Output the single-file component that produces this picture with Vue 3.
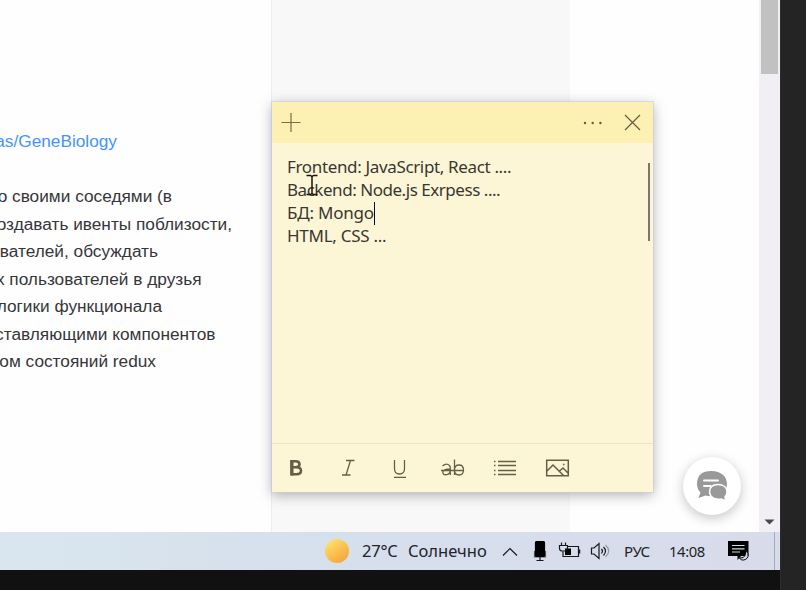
<script setup>
const lines = [
  { text: 'о своими соседями (в', end: 172 },
  { text: 'оздавать ивенты поблизости,', end: 232 },
  { text: 'вателей, обсуждать', end: 158 },
  { text: 'х пользователей в друзья', end: 201.5 },
  { text: 'логики функционала', end: 162 },
  { text: 'ставляющими компонентов', end: 215.5 },
  { text: 'ом состояний redux', end: 156 },
]
const note = [
  { text: 'Frontend: JavaScript, React ....', gap: -0.35 },
  { text: 'Backend: Node.js Exrpess ....', gap: -0.46 },
  { text: 'БД: Mongo', gap: -0.2, caret: true },
  { text: 'HTML, CSS ...', gap: -0.28 },
]
</script>

<template>
  <div class="desktop">
    <div class="screen">
      <main class="browser">
        <article class="article">
          <div class="link" :style="{ width: '117px' }"><span>as/GeneBiology</span></div>
          <div class="para">
            <div v-for="l in lines" :key="l.text" class="line" :style="{ width: l.end + 'px' }"><span>{{ l.text }}</span></div>
          </div>
        </article>
        <aside class="column"></aside>
        <div class="rest"></div>
        <div class="scroll">
          <div class="thumb"></div>
          <svg width="11" height="6" viewBox="0 0 11 6"><path d="M.5.5h10L5.500 5.500z" fill="#484848" /></svg>
        </div>
      </main>

      <footer class="taskbar">
        <div class="sun"></div>
        <span class="temp">27°C</span>
        <span class="weather">Солнечно</span>
        <svg class="tray" width="170" height="38" viewBox="0 0 170 38">
          <g fill="none" stroke="#16181d" stroke-width="1.200">
            <path d="M13 23.500l7-7 7 7" />
            <path d="M44.500 19v6h11v-6" fill="#777d88" stroke="#555b66" />
            <rect x="45.500" y="9.500" width="9" height="15" rx="1" fill="#000" stroke="#000" />
            <path d="M50 25v4M46.500 28.500h7" />
            <path d="M78 14.500h10.500v10H73v-5" />
            <path d="M89.500 17.500v4" stroke-width="1.500" />
            <rect x="75" y="16.500" width="6" height="6.500" fill="#000" stroke="none" />
            <path d="M71.500 10.500v3M75.500 10.500v3M69.500 13.500h8v3q0 2.500-3 2.500h-2q-3 0-3-2.500z" />
            <path d="M101.500 16v6h2.500l5 4.500v-15l-5 4.500z" />
            <path d="M111.500 17q2 2 0 4.500M113.500 15q4 4 0 8.500" />
            <path d="M115.500 13q6.500 6 0 12" stroke="#9299a8" />
          </g>
        </svg>
        <span class="lang">РУС</span>
        <span class="clock">14:08</span>
        <svg class="notify" width="24" height="24" viewBox="0 0 24 24">
          <path d="M1 2h20.500v15H14l-3.500 4V17H1z" fill="#000" />
          <path d="M5 6.500h12.500M5 9.800h12.500M5 13h8" stroke="#d3d8e5" stroke-width="1.200" />
          <path d="M18.500 11.500q3.500 2.500 2.500 6-1.500 4-6.500 3.500l-2-2q4.500.500 5.500-2.500.800-2.500.500-5z" fill="#d3d8e5" stroke="#000" />
        </svg>
        <i class="peek"></i>
      </footer>
    </div>

    <section class="note">
      <header class="head">
        <svg width="20" height="20" viewBox="0 0 20 20"><path d="M.5 9.500h19M10 0v19" stroke="#776d48" stroke-width="1.200" /></svg>
        <svg class="dots" width="20" height="4" viewBox="0 0 20 4"><g fill="#655d40"><circle cx="2" cy="2" r="1.200" /><circle cx="9.700" cy="2" r="1.200" /><circle cx="17.400" cy="2" r="1.200" /></g></svg>
        <svg width="17" height="17" viewBox="0 0 17 17"><path d="M1 1l15 15M16 1L1 16" stroke="#655d40" stroke-width="1.200" /></svg>
      </header>
      <div class="body">
        <div class="written">
          <div v-for="n in note" :key="n.text" class="row"><span :style="{ letterSpacing: n.gap + 'px' }">{{ n.text }}</span><i v-if="n.caret" class="caret"></i></div>
        </div>
        <div class="bar"></div>
      </div>
      <div class="tools">
        <svg width="381" height="49" viewBox="0 0 381 49">
          <g fill="none" stroke="#665f47" stroke-width="1.300">
            <path d="M19.800 17v15.500" stroke-width="3.400" />
            <path d="M19 18.300h4.500q4 0 4 3 0 3-4 3H20h4.500q4.500 0 4.500 3.400 0 3.500-4.500 3.500H19" stroke-width="2.600" />
            <path d="M74 17.500h8.500M70 32h8.500M78.500 17.500l-4.500 14.500" />
            <path d="M122.500 17v8.500q0 5.500 5 5.500t5-5.500V17M122 34.300h12" />
            <path d="M170.500 23q4-3.500 7-.500.8 1 .8 3v6.500M178.300 26q-7 0-7.500 3 0 3 3.500 2.700 3.500-.200 4-4M182.500 16.500V32M182.500 27q0-5 4.500-5t4.500 5-4.500 5-4.500-5M169 27.500h23" />
            <path d="M226 18.500H244M226 22.500H244M226 27.500H244M226 31.500H244" stroke-width="1.400" />
            <path d="M222 18.500h1.500M222 22.500h1.500M222 27.500h1.500M222 31.500h1.500" />
            <path d="M274.700 17.200h21.600v15.600h-21.600zM275 28l6-6 10.500 10.500M287 28.500l4-3.500 5 5" stroke-width="1.500" />
            <path d="M291 21.500h1.500" />
          </g>
        </svg>
      </div>
    </section>

    <button class="chat" aria-label="Чат">
      <svg width="32" height="32" viewBox="0 0 32 32">
        <path d="M15.500 1C25 1 31 6.500 31 14q0 7-7 10.500-8 3-14.500 1L2.500 28l2-5.500Q1 19 1 14 1 1 15.500 1z" fill="#999" />
        <path d="M8 10.500h14M8 16h6.500" stroke="#fff" stroke-width="2" stroke-linecap="round" />
        <path d="M22 14.500c5.500 0 9 3 9 7.500q0 3-2 5l1 4-4.500-2q-11 1.500-12-7 0-7.500 8.500-7.500z" fill="#999" stroke="#fff" stroke-width="1.500" />
      </svg>
    </button>

    <svg class="pointer" width="12" height="22" viewBox="0 0 12 22"><path d="M.5 1.500h4l1.500 1 1.500-1h4M6 2.500v17M.5 20.500h4l1.500-1 1.500 1h4" fill="none" stroke="#18150e" stroke-width="1.500" /></svg>
  </div>
</template>

<style>
body { margin: 0; background: #111; overflow: hidden; }
</style>

<style scoped>
.desktop { position: relative; box-sizing: border-box; width: 806px; height: 590px; overflow: hidden; background: #111; border-right: 25px solid #242424; }
.desktop::after { content: ''; position: absolute; right: 0; top: 0; width: 1px; height: 590px; background: #2d2d31; }
.screen { display: flex; flex-direction: column; width: 780px; height: 570px; }
.browser { display: flex; height: 532px; background: #fefefe; }
.article { width: 271px; overflow: hidden; font: 17.25px/27.45px "Liberation Sans", Arial, sans-serif; color: #36363a; padding-top: 128px; box-sizing: border-box; }
.link, .line { display: flex; justify-content: flex-end; white-space: nowrap; }
.link { color: #4694f4; }
.para { padding-top: 28px; }
.column { box-sizing: border-box; width: 299px; background: #f8f8f8; border-left: 1px solid #eee; }
.rest { flex: 1; }
.scroll { width: 21px; background: #f1eff3; display: flex; flex-direction: column; align-items: center; justify-content: space-between; padding-bottom: 7px; box-sizing: border-box; }
.thumb { width: 17px; height: 74px; background: #c1c1c1; }
.taskbar { display: flex; align-items: center; height: 38px; background: linear-gradient(90deg, #d9e6ef, #d6dfec 45%, #d8dbea); font: 16.5px/38px "Noto Sans", "Open Sans", sans-serif; color: #22242b; white-space: nowrap; }
.sun { width: 24px; height: 24px; margin-left: 325px; border-radius: 50%; background: linear-gradient(145deg, #fbe36e 10%, #fbbd4c 55%, #f29d38); }
.temp { width: 46px; margin-left: 13px; letter-spacing: -.2px; }
.weather { width: 82px; letter-spacing: 0; }
.tray { flex: none; margin-right: -36px; }
.lang { width: 45px; font-size: 15px; letter-spacing: -.4px; }
.clock { width: 58px; font-size: 14.8px; letter-spacing: -.4px; }
.notify { flex: none; }
.peek { width: 1px; height: 38px; background: #a4a9b7; margin-left: auto; margin-right: 5px; }
.note { position: absolute; left: 272px; top: 102px; width: 381px; height: 390px; display: flex; flex-direction: column; background: #fdf6d6; box-shadow: 0 0 0 1px rgba(205, 200, 225, .6), 0 3px 12px rgba(35, 35, 55, .36); }
.head { display: flex; align-items: center; height: 41px; padding: 0 12px 0 9px; box-sizing: border-box; background: #fcf0b3; }
.dots { margin-left: auto; margin-right: 21px; }
.body { display: flex; justify-content: space-between; height: 300px; }
.written { padding: 13px 0 0 15px; font: 17px/22.9px "Noto Sans", "Open Sans", sans-serif; color: #393631; white-space: nowrap; }
.row { display: flex; align-items: center; height: 22.9px; }
.caret { width: 1px; height: 23px; background: #08083a; }
.bar { width: 2px; height: 78px; margin: 20px 3px 0 0; background: #7b776e; }
.tools { height: 49px; box-sizing: border-box; border-top: 1px solid #eae3c9; }
.tools svg { display: block; margin-top: -1px; }
.chat { position: absolute; left: 683px; top: 457px; width: 58px; height: 58px; display: grid; place-items: center; padding: 0; border: 0; border-radius: 50%; background: #fff; box-shadow: 0 3px 12px rgba(0, 0, 0, .23); }
.pointer { position: absolute; left: 306px; top: 174px; }
</style>
